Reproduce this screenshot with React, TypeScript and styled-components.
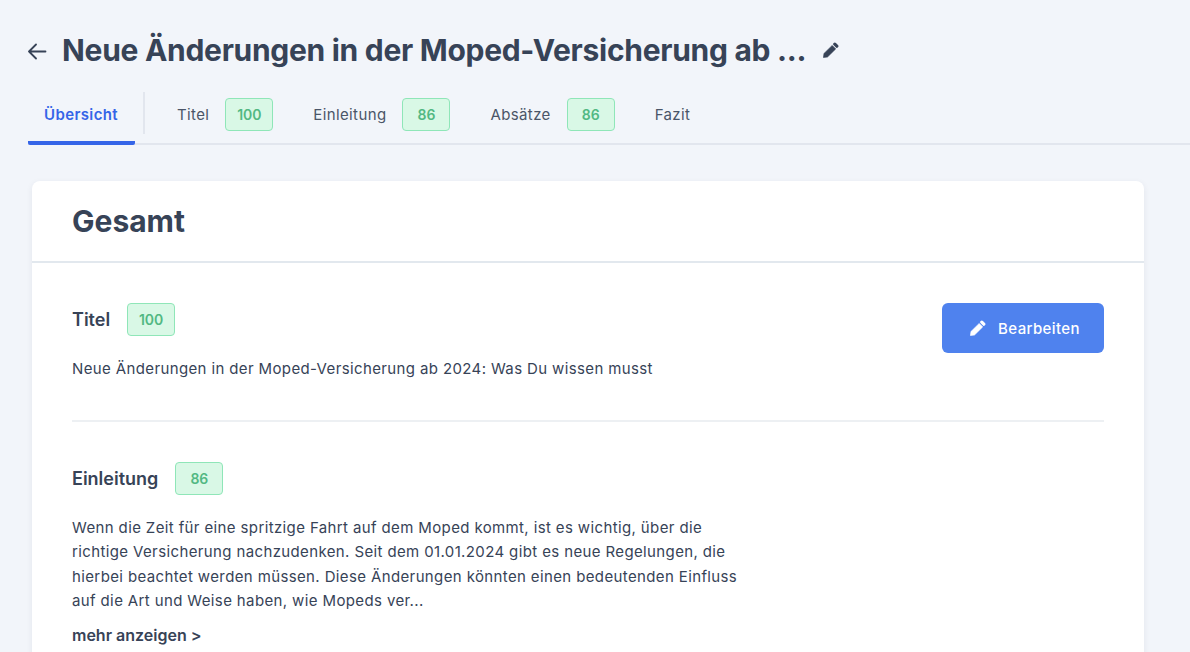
import React from "react";
import styled, { createGlobalStyle } from "styled-components";

const Global = createGlobalStyle`
  html, body { margin: 0; padding: 0; height: 652px; overflow: hidden; background: #f2f5fa; }
  body { font-family: Inter, "Liberation Sans", sans-serif; color: #374357; }
  * { box-sizing: border-box; }
`;

const Page = styled.div`
  height: 652px;
  overflow: hidden;
  padding: 28px 0 0 28px;
  width: 1190px;
`;

const TitleRow = styled.div`
  display: flex;
  align-items: center;
  height: 44px;
`;

const BackButton = styled.span`
  display: flex;
  width: 34px;
  color: #374357;
`;

const Title = styled.h1`
  margin: 0;
  font-size: 30px;
  line-height: 44px;
  font-weight: 700;
  letter-spacing: -0.29px;
  color: #374357;
  white-space: nowrap;
`;

const TitleEdit = styled.span`
  display: flex;
  margin-left: 17px;
  color: #374357;
`;

const TabBar = styled.nav`
  display: flex;
  align-items: stretch;
  margin-top: 17px;
  height: 56px;
  width: 1162px;
  border-bottom: 2px solid #e2e6ee;
`;

const ActiveTab = styled.div`
  display: flex;
  align-items: center;
  height: 56px;
  width: 107px;
  padding: 0 16px 2px;
  margin-bottom: -2px;
  font-size: 15px;
  font-weight: 600;
  letter-spacing: 0.025em;
  color: #3565e8;
  border-bottom: 4px solid #3565e8;
  border-radius: 0 0 2px 2px;
  white-space: nowrap;
`;

const TabDivider = styled.div`
  width: 2px;
  height: 42px;
  margin: 3px 32px 0 8px;
  background: #e2e6ee;
`;

const Tab = styled.div`
  display: flex;
  align-items: center;
  gap: 16px;
  height: 40px;
  margin: 5px 40px 0 0;
  font-size: 15px;
  font-weight: 400;
  letter-spacing: 0.025em;
  color: #4a5568;
  white-space: nowrap;
`;

const Badge = styled.span`
  display: inline-flex;
  align-items: center;
  justify-content: center;
  width: 48px;
  height: 33px;
  border: 1px solid #8fe6b8;
  border-radius: 4px;
  background: #d9f8e6;
  color: #52b883;
  font-size: 14px;
  font-weight: 600;
  letter-spacing: 0;
`;

const Card = styled.section`
  width: 1112px;
  margin: 36px 0 0 4px;
  background: #fff;
  border-radius: 8px;
  box-shadow: 0 2px 6px rgba(45, 55, 72, 0.08);
`;

const CardHeader = styled.header`
  height: 82px;
  padding: 0 40px;
  display: flex;
  align-items: center;
  border-bottom: 2px solid #e2e8ee;
`;

const CardTitle = styled.h2`
  margin: 0;
  font-size: 30px;
  font-weight: 700;
  color: #374357;
`;

const CardBody = styled.div`
  padding: 40px 40px 40px;
`;

const Section = styled.div`
  display: flex;
  justify-content: space-between;
  align-items: flex-start;
`;

const SectionMain = styled.div`
  width: 672px;
`;

const SectionHead = styled.div`
  display: flex;
  align-items: center;
  gap: 17px;
  height: 33px;
`;

const SectionLabel = styled.h3`
  margin: 0;
  font-size: 18px;
  font-weight: 600;
  color: #374357;
`;

const BodyText = styled.p`
  margin: 21px 0 0;
  font-size: 15px;
  line-height: 24.2px;
  letter-spacing: 0.025em;
  color: #374357;
`;

const EditButton = styled.button`
  display: flex;
  align-items: center;
  justify-content: center;
  gap: 12px;
  width: 162px;
  height: 50px;
  padding: 0 0 0 4px;
  border: 0;
  border-radius: 6px;
  background: #4f82ee;
  color: #fff;
  font-family: inherit;
  font-size: 15px;
  font-weight: 500;
  letter-spacing: 0.025em;
`;

const Rule = styled.hr`
  margin: 39px 0 40px;
  border: 0;
  height: 2px;
  background: #edf0f3;
`;

const MoreLink = styled.div`
  margin-top: 12px;
  font-size: 16px;
  line-height: 20px;
  font-weight: 600;
  color: #374357;
`;

const Arrow = () => (
  <svg width="20" height="20" viewBox="0 0 20 20" fill="none" stroke="currentColor" strokeWidth="1.8" strokeLinecap="round" strokeLinejoin="round">
    <path d="M17.5 11.5H1M8 4.5 1 11.5 8 18.5" />
  </svg>
);

const Pencil = () => (
  <svg width="16" height="16" viewBox="0 0 16 16" fill="currentColor">
    <path d="M0.4 15.6 1 11.5 9.2 3.4 12.7 6.9 4.5 15Z" stroke="currentColor" strokeWidth="0.6" strokeLinejoin="round" />
    <path d="M11.8 2.2 13.8 4.2" fill="none" stroke="currentColor" strokeWidth="3.2" strokeLinecap="round" />
  </svg>
);

export default function App() {
  return (
    <Page>
      <Global />
      <TitleRow>
        <BackButton><Arrow /></BackButton>
        <Title>Neue Änderungen in der Moped-Versicherung ab ...</Title>
        <TitleEdit><Pencil /></TitleEdit>
      </TitleRow>
      <TabBar>
        <ActiveTab>Übersicht</ActiveTab>
        <TabDivider />
        <Tab>Titel <Badge>100</Badge></Tab>
        <Tab>Einleitung <Badge>86</Badge></Tab>
        <Tab>Absätze <Badge>86</Badge></Tab>
        <Tab>Fazit</Tab>
      </TabBar>
      <Card>
        <CardHeader><CardTitle>Gesamt</CardTitle></CardHeader>
        <CardBody>
          <Section>
            <SectionMain>
              <SectionHead>
                <SectionLabel>Titel</SectionLabel>
                <Badge>100</Badge>
              </SectionHead>
              <BodyText>Neue Änderungen in der Moped-Versicherung ab 2024: Was Du wissen musst</BodyText>
            </SectionMain>
            <EditButton><Pencil />Bearbeiten</EditButton>
          </Section>
          <Rule />
          <SectionMain>
            <SectionHead>
              <SectionLabel>Einleitung</SectionLabel>
              <Badge>86</Badge>
            </SectionHead>
            <BodyText>
              Wenn die Zeit für eine spritzige Fahrt auf dem Moped kommt, ist es wichtig, über die richtige Versicherung nachzudenken. Seit dem 01.01.2024 gibt es neue Regelungen, die hierbei beachtet werden müssen. Diese Änderungen könnten einen bedeutenden Einfluss auf die Art und Weise haben, wie Mopeds ver...
            </BodyText>
            <MoreLink>mehr anzeigen &gt;</MoreLink>
          </SectionMain>
        </CardBody>
      </Card>
    </Page>
  );
}
